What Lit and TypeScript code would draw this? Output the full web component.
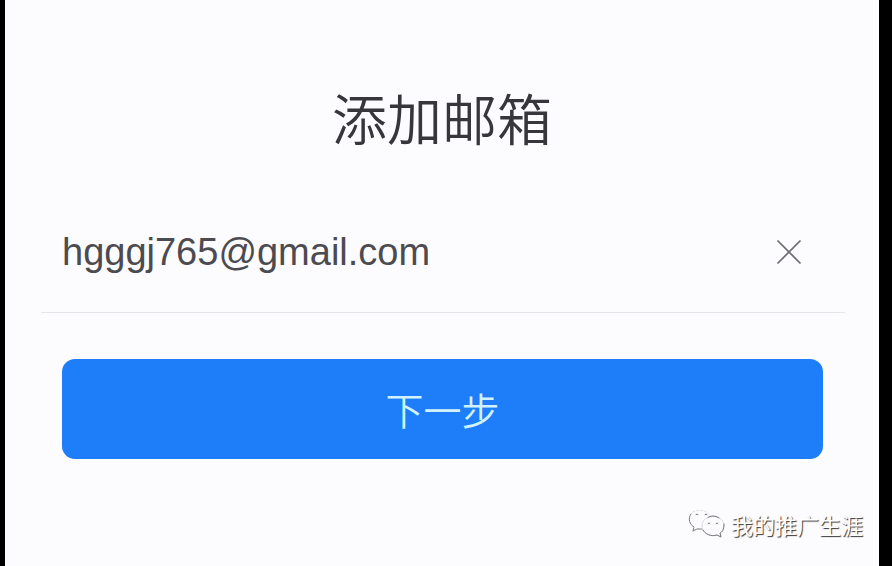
import { LitElement, html, css } from "lit";
import { customElement, state } from "lit/decorators.js";

@customElement("app-root")
export class AppRoot extends LitElement {
  @state() private email = "hgggj765@gmail.com";

  static styles = css`
    :host {
      display: block;
      font-family: "Liberation Sans", "Noto Sans CJK SC", sans-serif;
      background: #000;
    }
    * {
      box-sizing: border-box;
    }
    .screen {
      display: flex;
      flex-direction: column;
      min-height: 100vh;
      margin: 0 13px 0 5px;
      padding: 76px 34px 24px 36px;
      background: #fcfbfe;
    }
    .title {
      margin: 0;
      padding-right: 2px;
      font-family: "Noto Sans CJK SC", sans-serif;
      font-size: 55px;
      line-height: 80px;
      font-weight: 350;
      text-align: center;
      color: #37363a;
    }
    .field {
      display: flex;
      align-items: center;
      height: 121px;
      margin-top: 36px;
      padding: 0 22px 0 21px;
      border-bottom: 1px solid #e6e5e9;
    }
    .email {
      flex: 1;
      min-width: 0;
      height: 60px;
      padding: 0;
      border: 0;
      outline: 0;
      background: none;
      font: 38px/60px "Liberation Sans", sans-serif;
      color: #4c4b50;
    }
    .clear {
      display: flex;
      align-items: center;
      justify-content: center;
      width: 68px;
      height: 60px;
      padding: 0;
      border: 0;
      background: none;
      color: #6c6b6f;
    }
    .next {
      height: 100px;
      margin: 46px 22px 0 21px;
      padding: 0;
      border: 0;
      border-radius: 13px;
      background: #1e7df8;
      color: #d0f2ff;
      font: 350 38px/100px "Noto Sans CJK SC", sans-serif;
    }
    .credit {
      display: flex;
      align-items: center;
      justify-content: flex-end;
      gap: 6px;
      margin: auto -18px 0 0;
      font: 22px/36px "Noto Sans CJK SC", sans-serif;
      color: #fff;
      text-shadow: 1px 1px 1px #333;
    }
  `;

  private onInput(e: Event) {
    this.email = (e.target as HTMLInputElement).value;
  }

  render() {
    return html`
      <main class="screen">
        <h1 class="title">添加邮箱</h1>
        <div class="field">
          <input
            class="email"
            type="email"
            aria-label="邮箱"
            spellcheck="false"
            .value=${this.email}
            @input=${this.onInput}
          />
          <button class="clear" type="button" aria-label="清除" @click=${() => (this.email = "")}>
            <svg width="26" height="26" viewBox="0 0 26 26" fill="none" stroke="currentColor" stroke-width="1.7">
              <path d="M1.5 1.5 24.5 24.5M24.5 1.5 1.5 24.5" />
            </svg>
          </button>
        </div>
        <button class="next" type="button">下一步</button>
        <footer class="credit">
          <svg width="37" height="30" viewBox="0 0 37 30" fill="none" stroke="#77767a" stroke-width="1" stroke-linecap="round">
            <path d="M3 5C0 9 1 15 6 18L5 22 9 20 14 20" stroke-dasharray="3 1" />
            <path d="M5 3C10 0 19 1 22 7" stroke="#dddce1" stroke-dasharray="2 2" />
            <path d="M8 5.500Q9 4.500 10 5.500M17 5.500Q18 4.500 19 5.500" />
            <path d="M14 17C14 11 19 7 25 7S36 11 36 17C36 21 34 23 32 24L33 28 29 26C21 28 14 24 14 17Z" stroke="#dddce1" />
            <path d="M36 15C36 21 34 23 32 24L33 28 29 26C23 28 17 25 15 21" />
            <path d="M20 8.500C22 7 27 6 31 9" />
            <path d="M20 14.500Q21 13 22 14.500M28 14.500Q29 13 30 14.500" />
          </svg>
          <span>我的推广生涯</span>
        </footer>
      </main>
    `;
  }
}
